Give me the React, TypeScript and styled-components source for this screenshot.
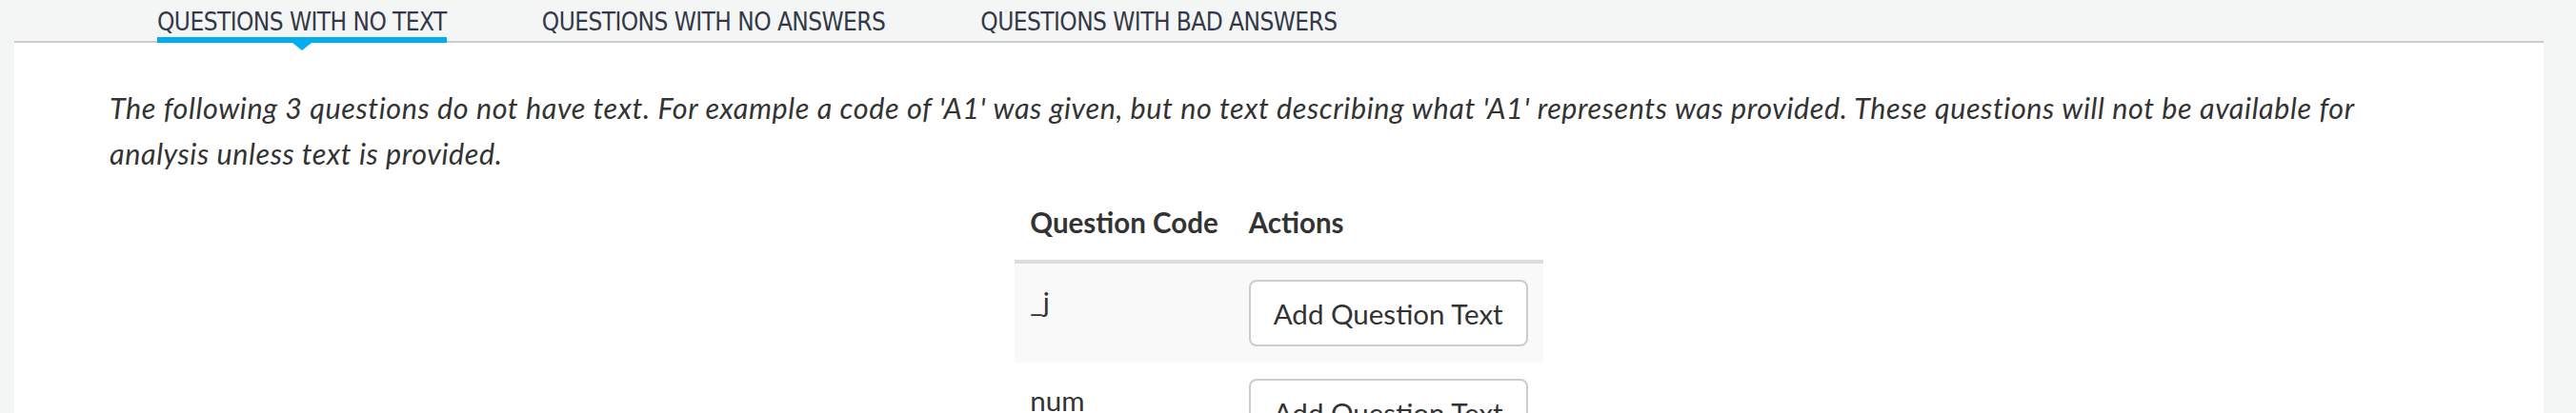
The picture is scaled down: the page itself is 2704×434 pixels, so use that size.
import React from "react";
import styled, { createGlobalStyle, css } from "styled-components";

const GlobalStyle = createGlobalStyle`
  html, body {
    margin: 0;
    padding: 0;
    background: #f4f6f5;
  }
  * { box-sizing: border-box; }
`;

const Page = styled.div`
  padding: 0 34px 0 15px;
  min-height: 434px;
  display: flex;
  flex-direction: column;
`;

const TabBar = styled.nav`
  display: flex;
  gap: 100px;
  height: 45px;
  padding-left: 150px;
  border-bottom: 2px solid #cccccc;
`;

const Tab = styled.div<{ $active?: boolean }>`
  position: relative;
  height: 43px;
  padding-top: 3px;
  line-height: 40px;
  font-family: "Liberation Sans Narrow", "DejaVu Sans Condensed", Lato, sans-serif;
  font-size: 26px;
  letter-spacing: -0.56px;
  color: #343948;
  text-transform: uppercase;
  white-space: nowrap;
  cursor: pointer;
  ${(p) =>
    p.$active &&
    css`
      &::after {
        content: "";
        position: absolute;
        left: 0;
        right: 0;
        bottom: -2px;
        height: 6px;
        background: #00aeef;
      }
      &::before {
        content: "";
        position: absolute;
        left: 50%;
        bottom: -10px;
        transform: translateX(-50%);
        border-left: 10px solid transparent;
        border-right: 10px solid transparent;
        border-top: 8px solid #00aeef;
        z-index: 1;
      }
    `}
`;

const Panel = styled.main`
  flex: 1;
  background: #ffffff;
  padding: 44px 100px 0 100px;
  font-family: Lato, "Open Sans", sans-serif;
  color: #333333;
`;

const Intro = styled.p`
  margin: 0 0 10px 0;
  font-size: 30.5px;
  letter-spacing: 0.6px;
  line-height: 48px;
  font-style: italic;
`;

const Table = styled.table`
  margin: 0 auto;
  border-collapse: collapse;
  font-size: 29.5px;
  line-height: 46px;
`;

const HeadCell = styled.th`
  text-align: left;
  font-weight: 700;
  vertical-align: bottom;
  padding: 16px;
  border-bottom: 4px solid #dddddd;
  white-space: nowrap;
`;

const Row = styled.tr<{ $striped?: boolean }>`
  background: ${(p) => (p.$striped ? "#f9f9f9" : "#ffffff")};
  & + & > td {
    border-top: 2px solid #dddddd;
  }
`;

const Cell = styled.td`
  vertical-align: top;
  padding: 17px 16px;
`;

const Button = styled.button`
  height: 70px;
  padding: 0 24px;
  background: #ffffff;
  border: 2px solid #cccccc;
  border-radius: 8px;
  font-family: Lato, "Open Sans", sans-serif;
  font-size: 29.5px;
  color: #333333;
  cursor: pointer;
  white-space: nowrap;
`;

const tabs = [
  "Questions with no text",
  "Questions with no answers",
  "Questions with bad answers",
];

const codes = ["_j", "num", "x2"];

export default function App() {
  return (
    <>
      <GlobalStyle />
      <Page>
        <TabBar>
          {tabs.map((t, i) => (
            <Tab key={t} $active={i === 0}>
              {t}
            </Tab>
          ))}
        </TabBar>
        <Panel>
          <Intro>
            The following 3 questions do not have text. For example a code of 'A1' was given,
            but no text describing what 'A1' represents was provided. These questions will not
            be available for analysis unless text is provided.
          </Intro>
          <Table>
            <thead>
              <tr>
                <HeadCell>Question Code</HeadCell>
                <HeadCell>Actions</HeadCell>
              </tr>
            </thead>
            <tbody>
              {codes.map((c, i) => (
                <Row key={c} $striped={i % 2 === 0}>
                  <Cell>{c}</Cell>
                  <Cell>
                    <Button>Add Question Text</Button>
                  </Cell>
                </Row>
              ))}
            </tbody>
          </Table>
        </Panel>
      </Page>
    </>
  );
}
